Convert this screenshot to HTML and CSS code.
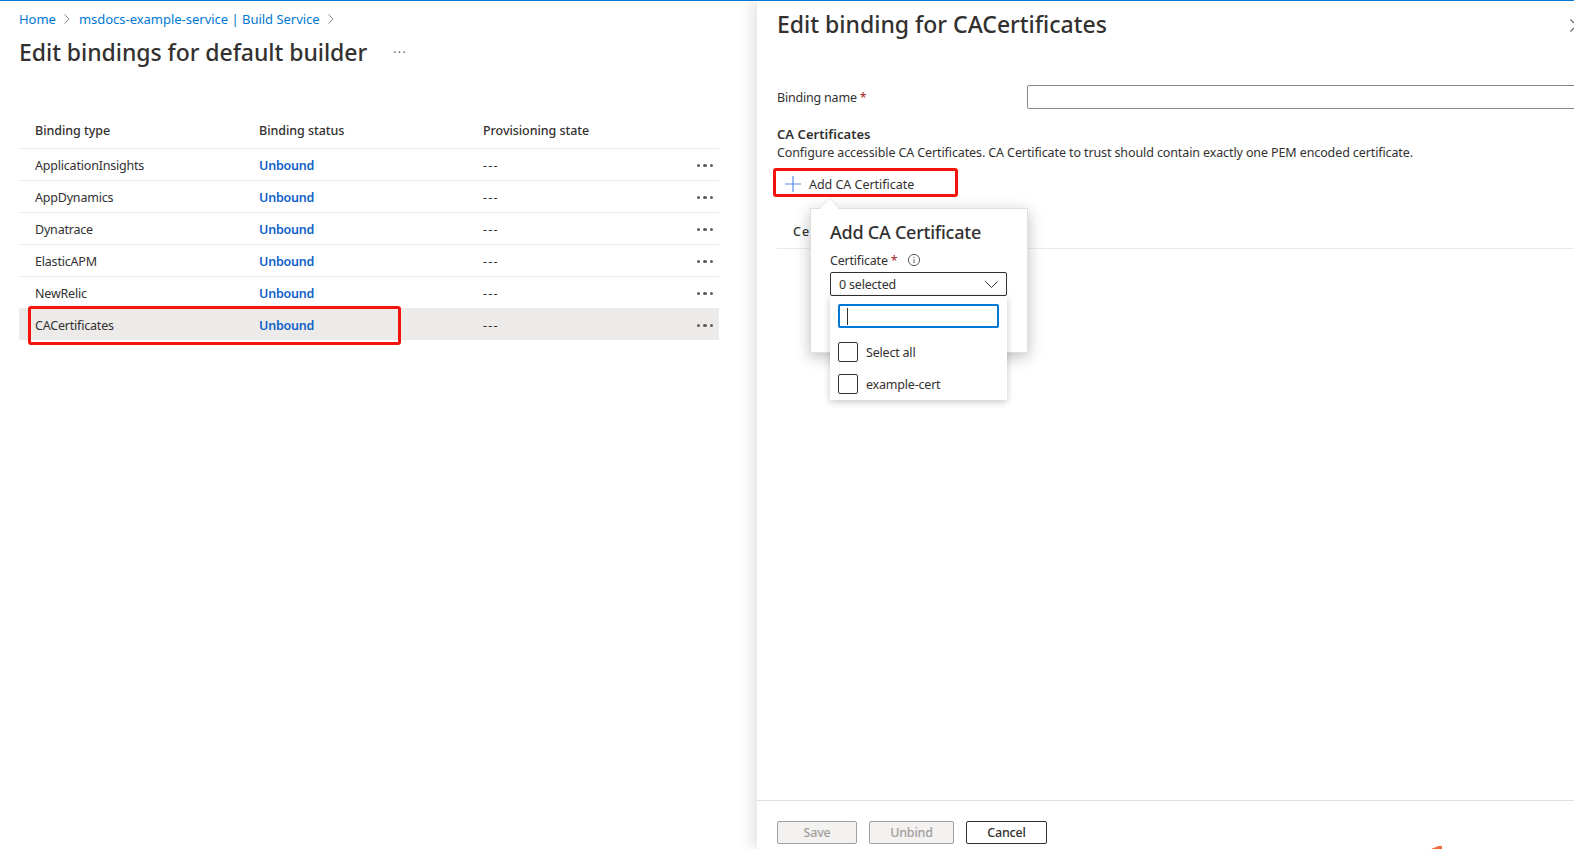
FILE: index.html
```html
<!DOCTYPE html>
<html lang="en">
<head>
<meta charset="utf-8">
<title>Edit bindings for default builder</title>
<link rel="stylesheet" href="styles.css">
</head>
<body>
<div class="page">
  <main class="main">
    <nav class="crumbs">
      <a class="crumb">Home</a>
      <svg class="crumb-sep" viewBox="0 0 8 12"><path d="M1.5 1.5l4.5 4.5-4.5 4.5"/></svg>
      <a class="crumb">msdocs-example-service | Build Service</a>
      <svg class="crumb-sep" viewBox="0 0 8 12"><path d="M1.5 1.5l4.5 4.5-4.5 4.5"/></svg>
    </nav>
    <div class="title-row">
      <h1 class="title">Edit bindings for default builder</h1>
      <span class="title-more">···</span>
    </div>
    <div class="table">
      <div class="row head"><span>Binding type</span><span>Binding status</span><span>Provisioning state</span><span></span></div>
      <div class="row"><span>ApplicationInsights</span><a class="status">Unbound</a><span class="dash">---</span><span class="more"><i></i><i></i><i></i></span></div>
      <div class="row"><span>AppDynamics</span><a class="status">Unbound</a><span class="dash">---</span><span class="more"><i></i><i></i><i></i></span></div>
      <div class="row"><span>Dynatrace</span><a class="status">Unbound</a><span class="dash">---</span><span class="more"><i></i><i></i><i></i></span></div>
      <div class="row"><span>ElasticAPM</span><a class="status">Unbound</a><span class="dash">---</span><span class="more"><i></i><i></i><i></i></span></div>
      <div class="row"><span>NewRelic</span><a class="status">Unbound</a><span class="dash">---</span><span class="more"><i></i><i></i><i></i></span></div>
      <div class="row selected"><span>CACertificates</span><a class="status">Unbound</a><span class="dash">---</span><span class="more"><i></i><i></i><i></i></span></div>
    </div>
    <div class="mark mark-row"></div>
  </main>
  <aside class="panel">
    <div class="panel-head">
      <h2 class="panel-title">Edit binding for CACertificates</h2>
      <svg class="close" viewBox="0 0 13 13"><path d="M.5.5l12 12M12.5.5l-12 12"/></svg>
    </div>
    <div class="panel-body">
      <div class="field">
        <label class="field-label">Binding name <b class="req">*</b></label>
        <div class="text-input"></div>
      </div>
      <h3 class="section-title">CA Certificates</h3>
      <p class="section-desc">Configure accessible CA Certificates. CA Certificate to trust should contain exactly one PEM encoded certificate.</p>
      <div class="add-btn">
        <svg class="plus" viewBox="0 0 16 16"><path d="M8 0v16M0 8h16"/></svg>
        <span>Add CA Certificate</span>
      </div>
      <div class="cert-head"><span>Certificate</span></div>
    </div>
    <div class="panel-foot">
      <button class="btn disabled btn-save">Save</button>
      <button class="btn disabled btn-unbind">Unbind</button>
      <button class="btn btn-cancel">Cancel</button>
    </div>
    <div class="mark mark-add"></div>
    <div class="popover">
      <div class="beak"></div>
      <h4 class="pop-title">Add CA Certificate</h4>
      <div class="pop-label">Certificate <b class="req">*</b>
        <svg class="info" viewBox="0 0 14 14"><circle cx="7" cy="7" r="5.6"/><path d="M7 6.2v4M7 3.8v1.2"/></svg>
      </div>
      <div class="select"><span>0 selected</span>
        <svg class="chev" viewBox="0 0 13 7"><path d="M.5.5l6 6 6-6"/></svg>
      </div>
      <div class="dropdown">
        <div class="search"><i class="caret"></i></div>
        <div class="opt"><i class="check"></i><span>Select all</span></div>
        <div class="opt"><i class="check"></i><span>example-cert</span></div>
      </div>
    </div>
    <div class="scribble"></div>
  </aside>
</div>
</body>
</html>
```
FILE: styles.css
```css
* { box-sizing: border-box; }
html, body { margin: 0; height: 100%; overflow: hidden; background: #fff; }
body { font-family: "Noto Sans", "Open Sans", sans-serif; font-size: 12.5px; color: #323130; letter-spacing: -0.2px; }
h1, h2, h3, h4, p { margin: 0; }
.page { position: relative; display: flex; height: 849px; width: 1574px; overflow: hidden; border-top: 1px solid #0078d4; }
.main { position: relative; width: 757px; flex: none; padding: 9px 38px 0 19px; }
.crumbs { display: flex; align-items: center; height: 18px; gap: 7.5px; color: #0078d4; }
.crumb { color: #0078d4; font-size: 13px; letter-spacing: -0.02px; }
.crumb-sep { width: 8px; height: 12px; }
.crumb-sep path { fill: none; stroke: #8a8886; stroke-width: 1; }
.title-row { display: flex; align-items: center; height: 36px; margin-top: 6px; }
.title { font-size: 23px; font-weight: 500; color: #323130; letter-spacing: -0.05px; }
.title-more { margin-left: 26px; color: #605e5c; font-size: 12px; letter-spacing: 1.5px; }
.table { margin-top: 43px; }
.row { display: grid; grid-template-columns: 224px 224px 1fr 20px; align-items: center; height: 32px; padding: 2px 6px 0 16px; border-bottom: 1px solid #edebe9; }
.row.head { height: 36px; padding-top: 0; font-weight: 500; color: #323130; letter-spacing: -0.05px; }
.row.selected { height: 31px; background: #edebe9; border-bottom: 0; }
.status { color: #0f62c9; font-weight: 600; }
.dash { color: #323130; letter-spacing: 1.2px; }
.more { display: flex; justify-content: flex-end; gap: 3px; }
.more i { width: 3.5px; height: 3.5px; border-radius: 50%; background: #605e5c; }
.mark { position: absolute; border: 3px solid #f5140c; border-radius: 3px; pointer-events: none; }
.mark-row { left: 28px; top: 305px; width: 373px; height: 39px; }
.panel { position: relative; flex: 1; min-width: 0; display: flex; flex-direction: column; padding-left: 20px; box-shadow: -6px 0 12px rgba(0,0,0,0.10); background: #fff; }
.panel-head { display: flex; align-items: center; height: 47px; position: relative; }
.panel-title { font-size: 23px; font-weight: 500; letter-spacing: 0; margin-top: -1px; }
.close { position: absolute; left: 793px; top: 18px; width: 13px; height: 13px; }
.close path { fill: none; stroke: #605e5c; stroke-width: 1.1; }
.panel-body { flex: 1; padding-top: 37px; }
.field { display: flex; align-items: center; height: 24px; }
.field-label { width: 250px; flex: none; }
.req { color: #a4262c; font-weight: 400; }
.text-input { flex: none; width: 600px; height: 24px; border: 1px solid #8a8886; border-radius: 2px; }
.section-title { font-size: 13px; font-weight: 600; margin-top: 16px; line-height: 18px; letter-spacing: 0.05px; }
.section-desc { line-height: 18px; margin-top: 1px; white-space: nowrap; letter-spacing: -0.11px; }
.add-btn { display: flex; align-items: center; height: 28px; margin-top: 8px; padding-left: 8px; gap: 8px; letter-spacing: -0.03px; }
.plus { width: 16px; height: 16px; }
.plus path { fill: none; stroke: #5a8fe6; stroke-width: 1.2; }
.cert-head { margin-top: 17px; padding: 0 16px; border-bottom: 1px solid #edebe9; font-weight: 500; height: 34px; display: flex; align-items: center; letter-spacing: 1px; }
.panel-foot { flex: none; height: 49px; margin-left: -20px; padding: 20px 0 0 20px; border-top: 1px solid #e1dfdd; display: flex; gap: 12px; align-items: flex-start; }
.btn { height: 23px; font: inherit; font-weight: 500; border-radius: 2px; padding: 0; background: #fff; color: #323130; letter-spacing: -0.2px; border: 1px solid #323130; }
.btn.disabled { background: #f3f2f1; color: #a19f9d; border-color: #a19f9d; }
.btn-save { width: 80px; }
.btn-unbind { width: 85px; }
.btn-cancel { width: 81px; }
.mark-add { left: 16px; top: 167px; width: 185px; height: 29px; }
.popover { position: absolute; left: 53px; top: 207px; width: 218px; height: 145px; padding: 11px 19px; background: #fff; border: 1px solid #e1dfdd; box-shadow: 0 4px 14px rgba(0,0,0,0.25); }
.beak { position: absolute; left: 12px; top: -7px; width: 13px; height: 13px; background: #fff; transform: rotate(45deg); box-shadow: -2px -2px 4px rgba(0,0,0,0.05); }
.pop-title { position: relative; font-size: 18px; font-weight: 500; line-height: 24px; white-space: nowrap; letter-spacing: -0.25px; }
.pop-label { display: flex; align-items: center; gap: 3px; height: 20px; margin-top: 6px; }
.info { width: 14px; height: 14px; margin-left: 7px; }
.info circle, .info path { fill: none; stroke: #605e5c; stroke-width: 1; }
.select { display: flex; align-items: center; justify-content: space-between; width: 177px; height: 24px; margin-top: 2px; padding: 0 8px; border: 1px solid #323130; border-radius: 2px; background: #fff; }
.chev { width: 13px; height: 7px; }
.chev path { fill: none; stroke: #323130; stroke-width: 1; }
.dropdown { position: absolute; left: 19px; top: 87px; width: 177px; height: 104px; padding: 8px; background: #fff; box-shadow: 0 2px 7px rgba(0,0,0,0.22); }
.search { display: flex; align-items: center; width: 161px; height: 24px; padding-left: 7px; border: 2px solid #0078d4; border-radius: 2px; }
.caret { width: 1px; height: 17px; background: #323130; }
.opt { display: flex; align-items: center; gap: 8px; height: 32px; }
.search + .opt { margin-top: 8px; }
.check { width: 20px; height: 20px; border: 1px solid #323130; border-radius: 2px; }
.opt span { color: #323130; }
.scribble { position: absolute; left: 674px; bottom: 0; width: 11px; height: 3px; background: #f06a3a; clip-path: polygon(0 100%, 70% 0, 100% 0, 100% 100%); }
```
